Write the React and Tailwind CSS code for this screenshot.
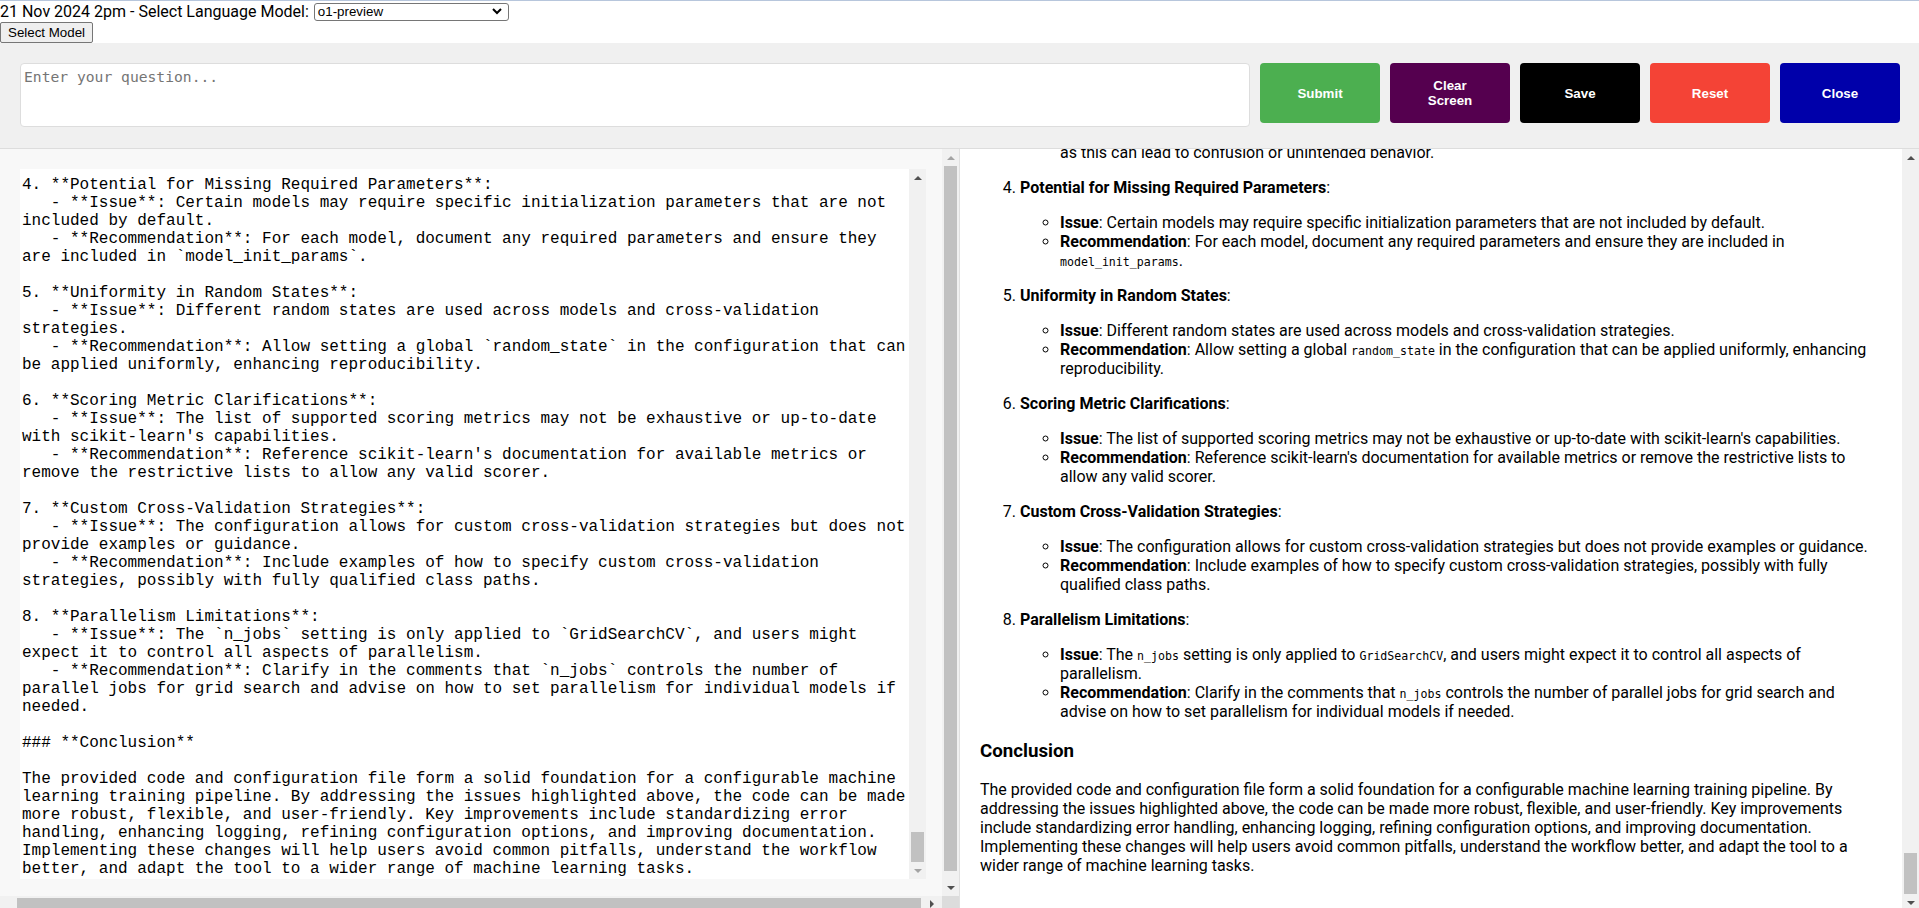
import React from "react";

const leftLines = [
  "4. **Potential for Missing Required Parameters**:",
  "   - **Issue**: Certain models may require specific initialization parameters that are not",
  "included by default.",
  "   - **Recommendation**: For each model, document any required parameters and ensure they",
  "are included in `model_init_params`.",
  "",
  "5. **Uniformity in Random States**:",
  "   - **Issue**: Different random states are used across models and cross-validation",
  "strategies.",
  "   - **Recommendation**: Allow setting a global `random_state` in the configuration that can",
  "be applied uniformly, enhancing reproducibility.",
  "",
  "6. **Scoring Metric Clarifications**:",
  "   - **Issue**: The list of supported scoring metrics may not be exhaustive or up-to-date",
  "with scikit-learn's capabilities.",
  "   - **Recommendation**: Reference scikit-learn's documentation for available metrics or",
  "remove the restrictive lists to allow any valid scorer.",
  "",
  "7. **Custom Cross-Validation Strategies**:",
  "   - **Issue**: The configuration allows for custom cross-validation strategies but does not",
  "provide examples or guidance.",
  "   - **Recommendation**: Include examples of how to specify custom cross-validation",
  "strategies, possibly with fully qualified class paths.",
  "",
  "8. **Parallelism Limitations**:",
  "   - **Issue**: The `n_jobs` setting is only applied to `GridSearchCV`, and users might",
  "expect it to control all aspects of parallelism.",
  "   - **Recommendation**: Clarify in the comments that `n_jobs` controls the number of",
  "parallel jobs for grid search and advise on how to set parallelism for individual models if",
  "needed.",
  "",
  "### **Conclusion**",
  "",
  "The provided code and configuration file form a solid foundation for a configurable machine",
  "learning training pipeline. By addressing the issues highlighted above, the code can be made",
  "more robust, flexible, and user-friendly. Key improvements include standardizing error",
  "handling, enhancing logging, refining configuration options, and improving documentation.",
  "Implementing these changes will help users avoid common pitfalls, understand the workflow",
  "better, and adapt the tool to a wider range of machine learning tasks.",
];

function Code({ children }) {
  return <code className="font-['DejaVu_Sans_Mono',monospace] text-[11.6px] leading-none">{children}</code>;
}

const items = [
  {
    title: "Potential for Missing Required Parameters",
    issue: "Certain models may require specific initialization parameters that are not included by default.",
    rec: (
      <>
        For each model, document any required parameters and ensure they are included in <Code>model_init_params</Code>.
      </>
    ),
  },
  {
    title: "Uniformity in Random States",
    issue: "Different random states are used across models and cross-validation strategies.",
    rec: (
      <>
        Allow setting a global <Code>random_state</Code> in the configuration that can be applied uniformly, enhancing
        reproducibility.
      </>
    ),
  },
  {
    title: "Scoring Metric Clarifications",
    issue: "The list of supported scoring metrics may not be exhaustive or up-to-date with scikit-learn's capabilities.",
    rec: "Reference scikit-learn's documentation for available metrics or remove the restrictive lists to allow any valid scorer.",
  },
  {
    title: "Custom Cross-Validation Strategies",
    issue: "The configuration allows for custom cross-validation strategies but does not provide examples or guidance.",
    rec: "Include examples of how to specify custom cross-validation strategies, possibly with fully qualified class paths.",
  },
  {
    title: "Parallelism Limitations",
    issue: (
      <>
        The <Code>n_jobs</Code> setting is only applied to <Code>GridSearchCV</Code>, and users might expect it to control
        all aspects of parallelism.
      </>
    ),
    rec: (
      <>
        Clarify in the comments that <Code>n_jobs</Code> controls the number of parallel jobs for grid search and advise on
        how to set parallelism for individual models if needed.
      </>
    ),
  },
];

function Arrow({ dir, dim }) {
  const fill = dim ? "#a3a3a3" : "#505050";
  const pts = {
    up: "0,4 4,0 8,4",
    down: "0,0 8,0 4,4",
    right: "0,0 4,4 0,8",
  }[dir];
  const w = dir === "right" ? 4 : 8;
  const h = dir === "right" ? 8 : 4;
  return (
    <svg width={w} height={h} viewBox={`0 0 ${w} ${h}`}>
      <polygon points={pts} fill={fill} />
    </svg>
  );
}

// classic scrollbar, thumb placed by a spacer
function VScroll({ spacer, thumb, upDim, downDim }) {
  return (
    <div className="w-[17px] shrink-0 bg-[#f1f1f1] flex flex-col">
      <div className="h-[17px] shrink-0 flex items-center justify-center">
        <Arrow dir="up" dim={upDim} />
      </div>
      <div className="flex-1 flex flex-col px-[2px]">
        <div className={spacer} />
        <div className={`${thumb} bg-[#c1c1c1]`} />
      </div>
      <div className="h-[17px] shrink-0 flex items-center justify-center">
        <Arrow dir="down" dim={downDim} />
      </div>
    </div>
  );
}

export default function App() {
  return (
    <div className="h-screen overflow-hidden bg-white text-black font-['Roboto',sans-serif] border-t border-[#b7c6dc]">
      {/* model picker */}
      <div className="h-[21px] flex items-center text-[16px] leading-[19px]">
        <span>21 Nov 2024 2pm - Select Language Model:</span>
        <div className="ml-[5px] w-[195px] h-[18px] border border-[#767676] rounded-[3px] bg-white flex items-center justify-between pl-[3px] pr-[6px] text-[13.33px] font-['Liberation_Sans',Arial,sans-serif]">
          <span>o1-preview</span>
          <svg width="10" height="7" viewBox="0 0 10 7">
            <polyline points="1,1 5,5 9,1" fill="none" stroke="#000" strokeWidth="2" />
          </svg>
        </div>
      </div>
      <div className="h-[21px] flex">
        <button className="h-[21px] px-[7px] border border-[#767676] rounded-[2px] bg-[#efefef] text-[13.33px] leading-[15px] font-['Liberation_Sans',Arial,sans-serif]">
          Select Model
        </button>
      </div>

      {/* question bar */}
      <div className="bg-[#f0f0f0] border-b border-[#dddddd] pt-[20px] pb-[21px] pl-[20px] pr-[19px] flex items-start gap-[10px]">
        <div className="flex-1 h-[64px] bg-white border border-[#dddddd] rounded-[4px] pt-[4px] pl-[3px] font-['DejaVu_Sans_Mono',monospace] text-[14.67px] leading-[17px] text-[#757575]">
          Enter your question...
        </div>
        {[
          { label: "Submit", cls: "bg-[#4caf50]" },
          { label: "Clear\nScreen", cls: "bg-[#55004f]" },
          { label: "Save", cls: "bg-black" },
          { label: "Reset", cls: "bg-[#f44336]" },
          { label: "Close", cls: "bg-[#0000aa]" },
        ].map((b) => (
          <button
            key={b.label}
            className={`${b.cls} w-[120px] h-[60px] shrink-0 rounded-[4px] text-white font-bold text-[13.33px] leading-[15px] whitespace-pre-line font-['Liberation_Sans',Arial,sans-serif]`}
          >
            {b.label}
          </button>
        ))}
      </div>

      <div className="h-[762px] flex">
        {/* raw markdown pane */}
        <div className="w-[960px] shrink-0 border-r border-[#e0e0e0] bg-[#f8f8f8] flex flex-col">
          <div className="flex-1 flex min-h-0">
            <div className="flex-1 overflow-hidden pl-[20px] pt-[20px]">
              <div className="w-[906px] h-[710px] bg-white flex">
                <div className="flex-1 overflow-hidden flex flex-col justify-end pl-[2px] pb-[1px] font-['Liberation_Mono','Courier_New',monospace] text-[16px] leading-[18px] whitespace-pre">
                  {leftLines.map((l, i) => (
                    <div key={i} className="h-[18px]">
                      {l}
                    </div>
                  ))}
                </div>
                <VScroll spacer="h-[646px]" thumb="h-[30px]" downDim />
              </div>
            </div>
            <VScroll spacer="h-0" thumb="h-[705px]" upDim />
          </div>
          <div className="h-[15px] shrink-0 flex">
            <div className="flex-1 bg-[#f1f1f1] flex items-center">
              <div className="w-[17px] shrink-0" />
              <div className="w-[904px] h-[11px] bg-[#c1c1c1]" />
              <div className="flex-1 flex items-center justify-center">
                <Arrow dir="right" />
              </div>
            </div>
            <div className="w-[17px] bg-[#dcdcdc]" />
          </div>
        </div>

        {/* rendered pane */}
        <div className="flex-1 flex min-w-0">
          <div className="flex-1 overflow-hidden px-[20px] text-[16px] leading-[19px]">
            <div className="mt-[-6px] pl-[80px]">as this can lead to confusion or unintended behavior.</div>
            <ol start={4} className="list-decimal pl-[40px]">
              {items.map((it) => (
                <li key={it.title}>
                  <p className="my-[16px]">
                    <strong>{it.title}</strong>:
                  </p>
                  <ul className="list-[circle] pl-[40px]">
                    <li>
                      <strong>Issue</strong>: {it.issue}
                    </li>
                    <li>
                      <strong>Recommendation</strong>: {it.rec}
                    </li>
                  </ul>
                </li>
              ))}
            </ol>
            <h3 className="text-[18.72px] leading-[22px] font-bold my-[18.72px]">Conclusion</h3>
            <p className="my-[16px]">
              The provided code and configuration file form a solid foundation for a configurable machine learning training
              pipeline. By addressing the issues highlighted above, the code can be made more robust, flexible, and
              user-friendly. Key improvements include standardizing error handling, enhancing logging, refining
              configuration options, and improving documentation. Implementing these changes will help users avoid common
              pitfalls, understand the workflow better, and adapt the tool to a wider range of machine learning tasks.
            </p>
          </div>
          <VScroll spacer="h-[687px]" thumb="h-[41px]" />
        </div>
      </div>
    </div>
  );
}
